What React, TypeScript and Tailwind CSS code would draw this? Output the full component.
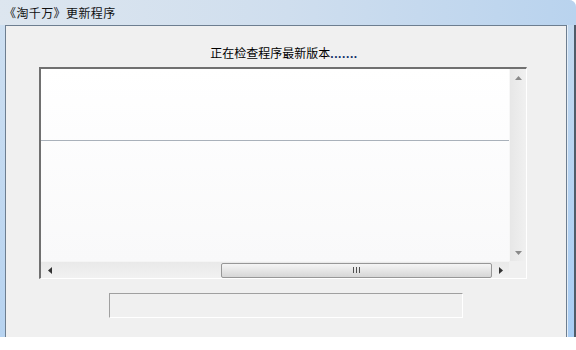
import React from "react";

const cjk = { fontFamily: '"Noto Sans CJK SC", "Noto Sans", sans-serif' };

function Tri({ dir, color }: { dir: "up" | "down" | "left" | "right"; color: string }) {
  if (dir === "up")
    return (
      <svg width="7" height="4" viewBox="0 0 7 4">
        <polygon points="0,4 3.5,0 7,4" fill={color} />
      </svg>
    );
  if (dir === "down")
    return (
      <svg width="7" height="4" viewBox="0 0 7 4">
        <polygon points="0,0 3.5,4 7,0" fill={color} />
      </svg>
    );
  if (dir === "left")
    return (
      <svg width="4" height="7" viewBox="0 0 4 7">
        <polygon points="4,0 0,3.5 4,7" fill={color} />
      </svg>
    );
  return (
    <svg width="4" height="7" viewBox="0 0 4 7">
      <polygon points="0,0 4,3.5 0,7" fill={color} />
    </svg>
  );
}

export default function App() {
  return (
    <div className="w-[576px] h-[350px] bg-white">
      <div className="w-[576px] h-[337px] flex flex-col bg-[#c6daee] rounded-tr-[7px] overflow-hidden">
        {/* title bar */}
        <div
          className="h-[25px] flex items-center pl-[4px] text-[12px] text-[#111111] bg-gradient-to-r from-[#dde6ef] via-[#cfdeee] to-[#b9d3ee]"
          style={cjk}
        >
          <span className="leading-[14px] tracking-[0.4px]">《淘千万》更新程序</span>
        </div>
        {/* body */}
        <div className="flex-1 flex">
          <div className="w-[5px] bg-gradient-to-b from-[#cddff1] to-[#b7d3f0]" />
          <div className="w-[562px] border-t border-l border-r border-[#6d7e90] bg-[#f0f0f0] flex flex-col">
            <div className="pt-[14px] pr-[4px] h-[30px] text-center">
              <span className="text-[12px] leading-[16px] text-black" style={cjk}>
                正在检查程序最新版本
              </span>
              <span
                className="text-[12px] leading-[16px] text-[#10306a] tracking-[0.6px] font-bold"
                style={{ fontFamily: '"Liberation Sans", sans-serif' }}
              >
                .......
              </span>
            </div>
            {/* list box */}
            <div className="ml-[33px] mt-[11px] w-[488px] h-[212px] border-t-2 border-l-2 border-t-[#707070] border-l-[#707070] border-r border-b border-r-white border-b-white flex flex-col">
              <div className="flex h-[192px]">
                <div className="w-[468px] bg-gradient-to-b from-white to-[#f9f9fa] flex flex-col">
                  <div className="h-[72px] border-b border-[#a9b1ba]" />
                </div>
                <div className="w-[17px] bg-gradient-to-r from-[#e7e7e7] to-[#f0f0f0] border-l border-[#f7f7f7] flex flex-col justify-between">
                  <div className="h-[17px] flex items-center justify-center">
                    <Tri dir="up" color="#8a8a8a" />
                  </div>
                  <div className="h-[17px] flex items-center justify-center">
                    <Tri dir="down" color="#8a8a8a" />
                  </div>
                </div>
              </div>
              <div className="flex h-[17px]">
                <div className="w-[468px] flex items-center bg-gradient-to-b from-[#e9e9e9] to-[#f1f1f1] border-t border-[#f5f5f5]">
                  <div className="w-[17px] h-full flex items-center justify-center">
                    <Tri dir="left" color="#333333" />
                  </div>
                  <div className="ml-[163px] w-[271px] h-[15px] rounded-[2px] border border-[#979797] bg-gradient-to-b from-[#f5f5f5] via-[#e6e6e6] to-[#d6d6d6] flex items-center justify-center gap-[2px]">
                    <div className="w-[1px] h-[6px] bg-[#505050]" />
                    <div className="w-[1px] h-[6px] bg-[#505050]" />
                    <div className="w-[1px] h-[6px] bg-[#505050]" />
                  </div>
                  <div className="w-[17px] h-full flex items-center justify-center">
                    <Tri dir="right" color="#333333" />
                  </div>
                </div>
                <div className="w-[17px] bg-[#f0f0f0]" />
              </div>
            </div>
            {/* progress box */}
            <div className="ml-[103px] mt-[14px] w-[354px] h-[25px] border-t border-l border-[#a0a0a0] border-r border-b border-r-white border-b-white bg-[#f0f0f0]" />
          </div>
          <div className="w-[7px] bg-gradient-to-b from-[#c3d9ef] to-[#a9cdf4] border-l border-[#e4eef8]" />
          <div className="w-[2px] bg-[#4f5c69]" />
        </div>
      </div>
    </div>
  );
}
